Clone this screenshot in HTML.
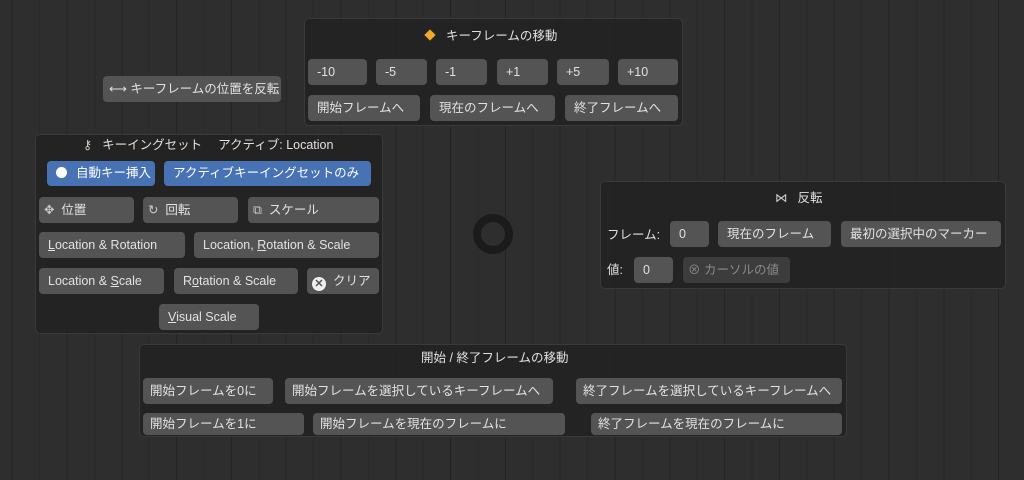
<!DOCTYPE html>
<html><head><meta charset="utf-8"><style>
*{box-sizing:border-box;margin:0;padding:0}
body{width:1024px;height:480px;overflow:hidden;position:relative;font-family:"Liberation Sans","Noto Sans CJK JP",sans-serif;font-size:12.5px;color:#e0e0e0;
background:#2e2e2e repeating-linear-gradient(90deg,transparent 0,transparent 11.7px,#242424 11.7px,#242424 12.7px,transparent 12.7px,transparent 39.1px,#292929 39.1px,#292929 40.1px,transparent 40.1px,transparent 54.8px);}
.p{position:absolute;background:rgba(35,35,35,.92);border:1px solid #3a3a3a;border-radius:5px}
.b{position:absolute;background:#545454;border-radius:4px;height:26px;line-height:26px;padding-left:9px;white-space:nowrap;color:#e2e2e2;overflow:hidden}
.bl{background:#4772b3;color:#fff}
.t{position:absolute;white-space:nowrap;color:#e0e0e0;line-height:16px}
.f{position:absolute;background:#545454;border-radius:4px;height:26px;line-height:26px;padding-left:9px}
.d{background:#3c3c3c;color:#8a8a8a}
u{text-decoration:underline}
</style></head><body>
<div style="position:absolute;left:473px;top:214px;width:40px;height:40px;border:8px solid #1b1b1b;border-radius:50%"></div>

<div class="p" style="left:304px;top:18px;width:379px;height:108px"></div>
<div class="t" style="left:426px;top:28px"><span style="display:inline-block;width:8px;height:8px;background:#f0a82a;transform:rotate(45deg);margin-right:12px;vertical-align:1px"></span>キーフレームの移動</div>
<div class="b" style="left:308px;top:59px;width:59px">-10</div>
<div class="b" style="left:376px;top:59px;width:51px">-5</div>
<div class="b" style="left:436px;top:59px;width:51px">-1</div>
<div class="b" style="left:497px;top:59px;width:51px">+1</div>
<div class="b" style="left:557px;top:59px;width:52px">+5</div>
<div class="b" style="left:618px;top:59px;width:60px">+10</div>
<div class="b" style="left:308px;top:95px;width:112px">開始フレームへ</div>
<div class="b" style="left:430px;top:95px;width:125px">現在のフレームへ</div>
<div class="b" style="left:565px;top:95px;width:113px">終了フレームへ</div>

<div class="b" style="left:103px;top:76px;width:178px;padding-left:6px">⟷&nbsp;キーフレームの位置を反転</div>

<div class="p" style="left:35px;top:134px;width:348px;height:200px"></div>
<div class="t" style="left:83px;top:137px"><span style="color:#ccc;margin-right:10px">⚷</span>キーイングセット　 アクティブ: Location</div>
<div class="b bl" style="left:47px;top:161px;width:108px;height:25px;line-height:25px"><span style="display:inline-block;width:11px;height:11px;background:#fff;border-radius:50%;vertical-align:-1px;margin-right:9px"></span>自動キー挿入</div>
<div class="b bl" style="left:164px;top:161px;width:207px;height:25px;line-height:25px">アクティブキーイングセットのみ</div>
<div class="b" style="left:39px;top:197px;width:95px;padding-left:5px"><span style="color:#ccc">✥</span>&nbsp; 位置</div>
<div class="b" style="left:143px;top:197px;width:95px;padding-left:5px"><span style="color:#ccc">↻</span>&nbsp; 回転</div>
<div class="b" style="left:248px;top:197px;width:131px;padding-left:5px"><span style="color:#ccc">⧉</span>&nbsp; スケール</div>
<div class="b" style="left:39px;top:232px;width:146px"><u>L</u>ocation &amp; Rotation</div>
<div class="b" style="left:194px;top:232px;width:185px">Location, <u>R</u>otation &amp; Scale</div>
<div class="b" style="left:39px;top:268px;width:125px">Location &amp; <u>S</u>cale</div>
<div class="b" style="left:174px;top:268px;width:124px">R<u>o</u>tation &amp; Scale</div>
<div class="b" style="left:307px;top:268px;width:72px;padding-left:5px"><span style="display:inline-block;width:14px;height:14px;background:#eee;border-radius:50%;color:#545454;font-size:11px;line-height:14px;text-align:center;font-weight:bold;vertical-align:-2px">✕</span>&nbsp; クリア</div>
<div class="b" style="left:159px;top:304px;width:100px"><u>V</u>isual Scale</div>

<div class="p" style="left:600px;top:181px;width:406px;height:108px"></div>
<div class="t" style="left:775px;top:190px"><span style="color:#ccc;margin-right:10px">⋈</span>反転</div>
<div class="t" style="left:607px;top:227px">フレーム:</div>
<div class="f" style="left:670px;top:221px;width:39px">0</div>
<div class="b" style="left:718px;top:221px;width:113px">現在のフレーム</div>
<div class="b" style="left:841px;top:221px;width:160px">最初の選択中のマーカー</div>
<div class="t" style="left:607px;top:262px">値:</div>
<div class="f" style="left:634px;top:257px;width:39px">0</div>
<div class="b d" style="left:683px;top:257px;width:107px;padding-left:5px">⊗&nbsp;カーソルの値</div>

<div class="p" style="left:139px;top:344px;width:708px;height:93px"></div>
<div class="t" style="left:421px;top:350px">開始 / 終了フレームの移動</div>
<div class="b" style="left:143px;top:378px;width:130px;padding-left:7px">開始フレームを0に</div>
<div class="b" style="left:285px;top:378px;width:268px;padding-left:7px">開始フレームを選択しているキーフレームへ</div>
<div class="b" style="left:576px;top:378px;width:266px;padding-left:7px">終了フレームを選択しているキーフレームへ</div>
<div class="b" style="left:143px;top:413px;width:161px;height:22px;line-height:22px;padding-left:7px">開始フレームを1に</div>
<div class="b" style="left:313px;top:413px;width:252px;height:22px;line-height:22px;padding-left:7px">開始フレームを現在のフレームに</div>
<div class="b" style="left:591px;top:413px;width:251px;height:22px;line-height:22px;padding-left:7px">終了フレームを現在のフレームに</div>
</body></html>
